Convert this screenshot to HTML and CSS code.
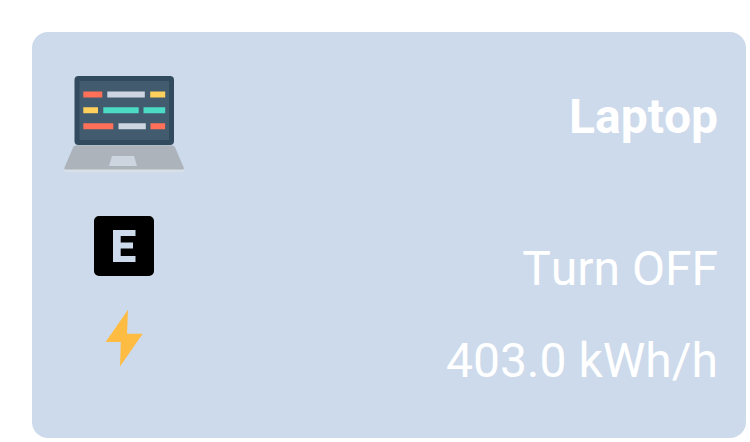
FILE: index.html
```html
<!DOCTYPE html>
<html lang="en">
<head>
<meta charset="utf-8">
<meta name="viewport" content="width=device-width, initial-scale=1">
<title>Laptop</title>
<link rel="stylesheet" href="styles.css">
</head>
<body>
<article class="card">
  <div class="row row-title">
    <div class="icon">
      <svg width="120" height="97" viewBox="0 0 120 97" aria-hidden="true">
        <path fill="#324a5e" d="M14.500 0h91.500a4 4 0 0 1 4 4v61a4 4 0 0 1-4 4H14.500a4 4 0 0 1-4-4V4a4 4 0 0 1 4-4z"/>
        <path fill="#425b6e" d="M15.500 5h89.500v59H15.500z"/>
        <path fill="#ff7058" d="M19.300 15.500h19v6h-19zM19.300 47.200h30v6h-30zM86.500 47.200h14.600v6H86.500z"/>
        <path fill="#cdd6e0" d="M43.300 15.500h37.500v6H43.300zM54.500 47.200h27.300v6H54.500z"/>
        <path fill="#ffd05b" d="M86.200 15.500h15v6h-15zM19.300 31.300h14.700v6H19.300z"/>
        <path fill="#4cdbc4" d="M39.300 31.300h35.400v6H39.300zM79.500 31.300h21.700v6H79.500z"/>
        <path fill="#d9dfe6" d="M0.500 92v3q0 1.300 1.500 1.300h116.200q1.500 0 1.500-1.300v-3z"/>
        <path fill="#acb3ba" d="M12.700 69.300h94.800q2.500 0 3.500 2l8.700 20.200q.6 2-1.500 2H2q-2.100 0-1.500-2L9.200 71.300q1-2 3.500-2z"/>
        <path fill="#cdd6e0" d="M48 80h22l3 10H45z"/>
      </svg>
    </div>
    <h1 class="text title">Laptop</h1>
  </div>
  <div class="row">
    <div class="icon">
      <svg width="60" height="60" viewBox="0 0 60 60" aria-hidden="true">
        <path fill-rule="evenodd" d="M5 0h50a5 5 0 0 1 5 5v50a5 5 0 0 1-5 5H5a5 5 0 0 1-5-5V5a5 5 0 0 1 5-5zM19 14v32h22.500v-6H26.700v-7.500H39v-6H26.700V20h14.800v-6z"/>
      </svg>
    </div>
    <button class="text toggle" type="button">Turn OFF</button>
  </div>
  <div class="row">
    <div class="icon">
      <svg width="60" height="60" viewBox="0 0 60 60" aria-hidden="true">
        <path fill="#ffbc42" d="M34 1.700 11.600 34h15.200L26 58.500 48.700 25.700H33z"/>
      </svg>
    </div>
    <p class="text">403.0 kWh/h</p>
  </div>
</article>
</body>
</html>
```
FILE: styles.css
```css
body {
  margin: 0;
  background: #fff;
  font-family: Roboto, sans-serif;
  font-kerning: none;
}

.card {
  margin: 32px 4px 4px 32px;
  padding: 44px 28px 38px 32px;
  border-radius: 16px;
  background: #cddaeb;
}

.row {
  display: flex;
  justify-content: space-between;
  align-items: flex-start;
  min-height: 92px;
}

.row-title {
  min-height: 140px;
}

.icon {
  display: flex;
  justify-content: center;
  width: 120px;
}

.text {
  margin: 24px 0 0;
  color: #fff;
  font-size: 48px;
  font-weight: 400;
  line-height: 58px;
}

.title {
  margin-top: 12px;
  font-weight: 700;
}

.toggle {
  padding: 0;
  border: 0;
  background: none;
  font-family: inherit;
  font-kerning: inherit;
  cursor: pointer;
}
```
